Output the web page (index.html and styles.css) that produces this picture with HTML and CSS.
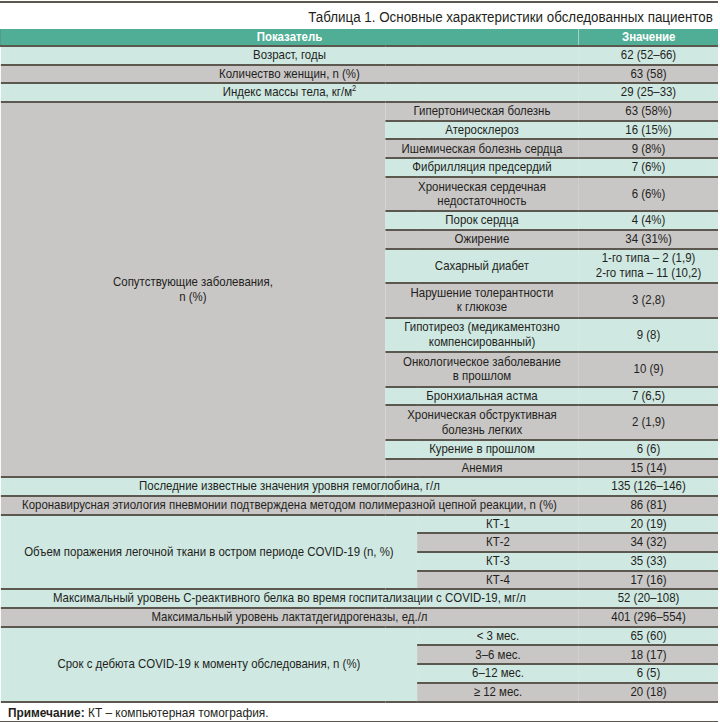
FILE: index.html
```html
<!DOCTYPE html>
<html lang="ru">
<head>
  <meta charset="UTF-8" />
  <title>Таблица 1</title>
  <link rel="stylesheet" href="styles.css">
</head>
<body>
<div class="sheet">
<div class="page">
  <div class="rule"></div>
  <div class="caption">Таблица 1. Основные характеристики обследованных пациентов</div>
  <table class="data">
    <colgroup>
      <col class="c-a"><col class="c-b"><col class="c-c"><col class="c-d">
    </colgroup>
    <tr class="head">
      <th colspan="3">Показатель</th>
      <th class="val">Значение</th>
    </tr>
    <tr class="t"><td colspan="3">Возраст, годы</td><td>62 (52–66)</td></tr>
    <tr class="g"><td colspan="3">Количество женщин, n (%)</td><td>63 (58)</td></tr>
    <tr class="t"><td colspan="3">Индекс массы тела, кг/м<sup>2</sup></td><td>29 (25–33)</td></tr>

    <tr class="g">
      <td class="group" rowspan="15">Сопутствующие заболевания,<br>n (%)</td>
      <td colspan="2">Гипертоническая болезнь</td><td>63 (58%)</td>
    </tr>
    <tr class="t"><td colspan="2">Атеросклероз</td><td>16 (15%)</td></tr>
    <tr class="g"><td colspan="2">Ишемическая болезнь сердца</td><td>9 (8%)</td></tr>
    <tr class="t"><td colspan="2">Фибрилляция предсердий</td><td>7 (6%)</td></tr>
    <tr class="g dbl"><td colspan="2">Хроническая сердечная<br>недостаточность</td><td>6 (6%)</td></tr>
    <tr class="t"><td colspan="2">Порок сердца</td><td>4 (4%)</td></tr>
    <tr class="g"><td colspan="2">Ожирение</td><td>34 (31%)</td></tr>
    <tr class="t dbl"><td colspan="2">Сахарный диабет</td><td>1-го типа – 2 (1,9)<br>2-го типа – 11 (10,2)</td></tr>
    <tr class="g dbl"><td colspan="2">Нарушение толерантности<br>к глюкозе</td><td>3 (2,8)</td></tr>
    <tr class="t dbl"><td colspan="2">Гипотиреоз (медикаментозно<br>компенсированный)</td><td>9 (8)</td></tr>
    <tr class="g dbl"><td colspan="2">Онкологическое заболевание<br>в прошлом</td><td>10 (9)</td></tr>
    <tr class="t"><td colspan="2">Бронхиальная астма</td><td>7 (6,5)</td></tr>
    <tr class="g dbl"><td colspan="2">Хроническая обструктивная<br>болезнь легких</td><td>2 (1,9)</td></tr>
    <tr class="t"><td colspan="2">Курение в прошлом</td><td>6 (6)</td></tr>
    <tr class="g"><td colspan="2">Анемия</td><td>15 (14)</td></tr>

    <tr class="t"><td colspan="3">Последние известные значения уровня гемоглобина, г/л</td><td>135 (126–146)</td></tr>
    <tr class="g"><td colspan="3">Коронавирусная этиология пневмонии подтверждена методом полимеразной цепной реакции, n (%)</td><td>86 (81)</td></tr>

    <tr class="t">
      <td class="group" rowspan="4" colspan="2">Объем поражения легочной ткани в остром периоде COVID-19 (n, %)</td>
      <td>КТ-1</td><td>20 (19)</td>
    </tr>
    <tr class="g"><td>КТ-2</td><td>34 (32)</td></tr>
    <tr class="t"><td>КТ-3</td><td>35 (33)</td></tr>
    <tr class="g"><td>КТ-4</td><td>17 (16)</td></tr>

    <tr class="t"><td colspan="3">Максимальный уровень С-реактивного белка во время госпитализации с COVID-19, мг/л</td><td>52 (20–108)</td></tr>
    <tr class="g"><td colspan="3">Максимальный уровень лактатдегидрогеназы, ед./л</td><td>401 (296–554)</td></tr>

    <tr class="t">
      <td class="group" rowspan="4" colspan="2">Срок с дебюта COVID-19 к моменту обследования, n (%)</td>
      <td>&lt; 3 мес.</td><td>65 (60)</td>
    </tr>
    <tr class="g"><td>3–6 мес.</td><td>18 (17)</td></tr>
    <tr class="t"><td>6–12 мес.</td><td>6 (5)</td></tr>
    <tr class="g"><td>≥ 12 мес.</td><td>20 (18)</td></tr>
  </table>
  <p class="note"><b>Примечание:</b> КТ – компьютерная томография.</p>
  <div class="rule"></div>
</div>
</div>
</body>
</html>
```

FILE: styles.css
```css
body {
  margin: 0;
  overflow: hidden;
  background-color: white;
  font-family: "Liberation Sans", Arial, sans-serif;
  color: #231f20;
}

.sheet {
  width: 718px;
  overflow: hidden;
}

/* the print font is a condensed face: squeeze the whole sheet horizontally */
.page {
  width: 816px;
  padding-top: 1px;
  transform: scaleX(0.88);
  transform-origin: 0 0;
}

.rule {
  height: 2px;
  background-color: #5c5850;
}

.caption {
  height: 26px;
  line-height: 27px;
  text-align: right;
  padding-right: 6px;
  font-size: 15.2px;
  color: #231f20;
}

.data {
  width: 100%;
  border-collapse: collapse;
  table-layout: fixed;
  font-size: 13px;
}

.c-a { width: 437.5px; }
.c-b { width: 36.4px; }
.c-c { width: 183px; }
.c-d { width: 159.1px; }

.data th,
.data td {
  padding: 0 4px;
  text-align: center;
  line-height: 14.5px;
  height: 16.7px;
  border-bottom: 2px solid #5c5850;
}

.data .dbl td {
  height: 32.5px;
}

.head th {
  background-color: #4fae95;
  color: white;
  font-weight: bold;
  height: 16px;
  border-left: 1px solid #3d9079;
}

.head th.val {
  border-left: 1px solid #a9d9cc;
}

.t td { background-color: #cfe8e2; }
.g td { background-color: #c9c6c6; }

td.group {
  vertical-align: middle;
}

.data sup {
  font-size: 8.5px;
  line-height: 0;
  vertical-align: 5px;
}

.note {
  margin: 0;
  height: 18px;
  line-height: 20px;
  padding-left: 9px;
  font-size: 13.5px;
}
```
